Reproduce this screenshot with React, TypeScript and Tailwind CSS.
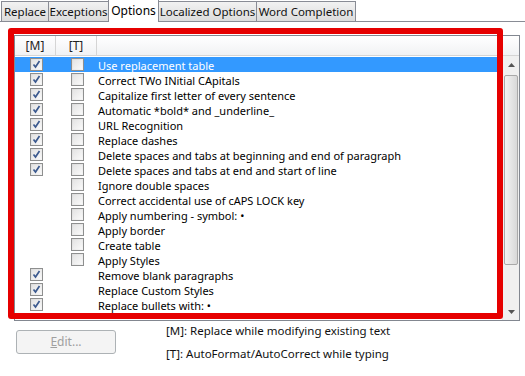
import React from "react";

const rows: { m: boolean | null; t: boolean | null; label: string }[] = [
  { m: true, t: false, label: "Use replacement table" },
  { m: true, t: false, label: "Correct TWo INitial CApitals" },
  { m: true, t: false, label: "Capitalize first letter of every sentence" },
  { m: true, t: false, label: "Automatic *bold* and _underline_" },
  { m: true, t: false, label: "URL Recognition" },
  { m: true, t: false, label: "Replace dashes" },
  { m: true, t: false, label: "Delete spaces and tabs at beginning and end of paragraph" },
  { m: true, t: false, label: "Delete spaces and tabs at end and start of line" },
  { m: null, t: false, label: "Ignore double spaces" },
  { m: null, t: false, label: "Correct accidental use of cAPS LOCK key" },
  { m: null, t: false, label: "Apply numbering - symbol: •" },
  { m: null, t: false, label: "Apply border" },
  { m: null, t: false, label: "Create table" },
  { m: null, t: false, label: "Apply Styles" },
  { m: true, t: null, label: "Remove blank paragraphs" },
  { m: true, t: null, label: "Replace Custom Styles" },
  { m: true, t: null, label: "Replace bullets with: •" },
];

function Check({ on }: { on: boolean }) {
  return (
    <div className="w-[13px] h-[13px] border border-[#8e8f8f] bg-gradient-to-br from-[#dcdcdc] to-[#f6f6f6] flex items-center justify-center">
      <div className="w-[9px] h-[9px] bg-gradient-to-br from-[#e4e4e4] to-[#f9f9f9] flex items-center justify-center">
        {on && (
          <svg width="9" height="9" viewBox="0 0 9 9">
            <path d="M1.5 4.5 L3.5 7 L7.5 1" stroke="#3c5a8f" strokeWidth="1.7" fill="none" />
          </svg>
        )}
      </div>
    </div>
  );
}

const tabs: { t: string; w: string }[] = [
  { t: "Replace", w: "w-[48px]" },
  { t: "Exceptions", w: "w-[61px]" },
  { t: "Options", w: "w-[51px]" },
  { t: "Localized Options", w: "w-[99px]" },
  { t: "Word Completion", w: "w-[100px]" },
];

export default function App() {
  return (
    <div
      className="w-[525px] h-[376px] bg-white relative overflow-hidden text-[11px] text-black"
      style={{ fontFamily: '"Noto Sans", "Open Sans", sans-serif' }}
    >
      {/* tabs */}
      <div className="flex items-end h-[22px] pl-[1px] border-b border-[#898c95]">
        {tabs.map(({ t, w }) =>
          t === "Options" ? (
            <div
              key={t}
              className={w + " h-[23px] -mb-px -ml-px bg-white border border-b-0 border-[#898c95] flex items-center justify-center leading-none text-[12px]"}
            >
              {t}
            </div>
          ) : (
            <div
              key={t}
              className={w + " h-[20px] bg-gradient-to-b from-[#f2f2f2] to-[#dcdcdc] border border-b-0 border-[#898c95] -ml-px first:ml-0 flex items-center justify-center leading-none text-[#111] text-[11.5px]"}
            >
              {t}
            </div>
          )
        )}
      </div>

      {/* list box */}
      <div className="ml-[14px] mt-[13px] w-[506px] h-[286px] border border-[#828790] flex flex-col">
        <div className="h-[20px] flex border-b border-[#d5d5d5] bg-gradient-to-b from-[#ffffff] to-[#f1f2f4] text-[#222] leading-none text-[12px]">
          <div className="w-[41px] border-r border-[#d5d5d5] flex items-center justify-center">[M]</div>
          <div className="w-[41px] border-r border-[#d5d5d5] flex items-center justify-center">[T]</div>
          <div className="flex-1" />
        </div>
        <div className="flex flex-1">
          <div className="flex-1 flex flex-col pt-[1px]">
            {rows.map((r, i) => (
              <div
                key={i}
                className={
                  "h-[15px] flex items-center " +
                  (i === 0 ? "bg-[#3399ff] text-white" : "")
                }
              >
                <div className="w-[41px] flex justify-center pl-[1px]">{r.m !== null && <Check on={r.m} />}</div>
                <div className="w-[41px] flex justify-center pl-[1px]">{r.t !== null && <Check on={r.t} />}</div>
                <div className="pl-[1px] whitespace-nowrap leading-[15px] pt-[1px]">{r.label}</div>
              </div>
            ))}
          </div>
          {/* scrollbar */}
          <div className="w-[17px] bg-[#f0f0f0] border-l border-[#e8e8e8] flex flex-col">
            <div className="h-[17px] flex items-center justify-center">
              <svg width="7" height="4" viewBox="0 0 7 4">
                <path d="M0 4 L3.5 0 L7 4 Z" fill="#555" />
              </svg>
            </div>
            <div className="mx-[1px] mt-[2px] h-[190px] rounded-[2px] border border-[#a9a9a9] bg-gradient-to-r from-[#f3f3f3] to-[#d8d8d8]" />
            <div className="flex-1" />
            <div className="h-[17px] flex items-center justify-center">
              <svg width="7" height="4" viewBox="0 0 7 4">
                <path d="M0 0 L7 0 L3.5 4 Z" fill="#555" />
              </svg>
            </div>
          </div>
        </div>
      </div>

      {/* bottom */}
      <div className="flex">
        <div className="ml-[16px] mt-[9px] w-[100px] h-[24px] border border-[#adb2b5] rounded-[3px] bg-[#f4f4f4] text-[#a0a0a0] flex items-center justify-center text-[12px]">
          <span>
            <span className="underline">E</span>dit...
          </span>
        </div>
        <div className="ml-[50px] mt-[2px] flex flex-col gap-[8px] text-[#111] leading-[15px] text-[11.5px]">
          <div>[M]: Replace while modifying existing text</div>
          <div>[T]: AutoFormat/AutoCorrect while typing</div>
        </div>
      </div>

      {/* red annotation frame */}
      <div className="absolute left-[8px] top-[28px] w-[495px] h-[291px] border-[6px] border-[#e60000] rounded-[3px] pointer-events-none" />
    </div>
  );
}
